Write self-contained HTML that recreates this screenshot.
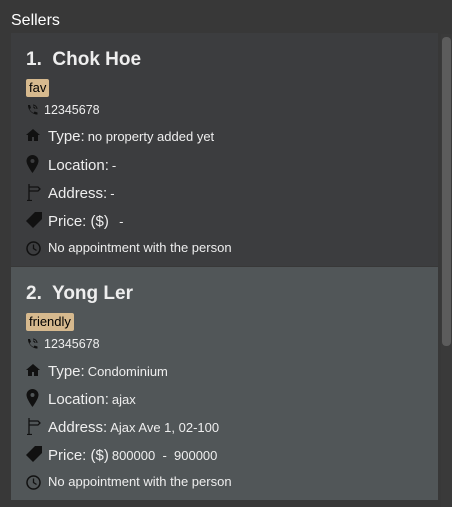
<html><head><style>
body{margin:0;width:452px;height:507px;background:#383838;font-family:"Liberation Sans",sans-serif;color:#fff;position:relative;overflow:hidden}
.t{position:absolute;white-space:nowrap}
.h{position:absolute;left:11px;top:12px;font-size:16px}
.card{position:absolute;left:11px;width:427px;height:233px}
.name{left:15px;font-size:19px;font-weight:bold;color:#eee}
.tag{left:15px;background:#d6b98e;color:#000;font-size:13px;padding:1px 3px;border-radius:2px;height:16px;line-height:16px}
.lab{left:37px;font-size:15px;color:#eee}
.lab span{font-size:13px;margin-left:3px}
.ph{left:33px;font-size:12.5px;color:#eee}
.ic{position:absolute;left:15px}
</style></head><body>
<div class="h">Sellers</div>
<div style="position:absolute;left:441px;top:34px;width:11px;height:473px;background:#3a3a3a"></div>
<div style="position:absolute;left:442px;top:37px;width:9px;height:309px;background:#5c5c5c;border-radius:4px"></div>
<div class="card" style="top:33px;background:#3c3d3f">
<div class="t name" style="top:16px">1.&nbsp; Chok Hoe</div>
<div class="t tag" style="top:46px">fav</div>
<svg class="ic" style="top:71px" width="12" height="13" viewBox="0 0 12 13"><path d="M2 1l2 0 1 3-1.5 1c1 2 2 3 4 4l1-1.5 3 1v2c-5 0-9.5-4-9.5-9.5z" fill="#111"/><path d="M7 1a4 4 0 0 1 4 4M7 3a2 2 0 0 1 2 2" stroke="#111" fill="none"/></svg>
<div class="t ph" style="top:70px">12345678</div>
<svg class="ic" style="top:96px" width="14" height="12" viewBox="0 0 14 12"><path d="M7 0L0 6h2v6h4V8h2v4h4V6h2z" fill="#111"/></svg>
<div class="t lab" style="top:95px">Type:<span>no property added yet</span></div>
<svg class="ic" style="top:122px" width="13" height="18" viewBox="0 0 13 18"><path d="M6.5 0a6 6 0 0 0-6 6c0 4 6 12 6 12s6-8 6-12a6 6 0 0 0-6-6zm0 4a2 2 0 1 1 0 4 2 2 0 0 1 0-4z" fill="#111"/></svg>
<div class="t lab" style="top:124px">Location:<span>-</span></div>
<svg class="ic" style="top:151px" width="15" height="17" viewBox="0 0 15 17"><path d="M3 0v17M1 16.5h5M3 3h9l2 2-2 2H3" stroke="#111" fill="none" stroke-width="1.3"/></svg>
<div class="t lab" style="top:152px">Address:<span>-</span></div>
<svg class="ic" style="top:179px" width="16" height="16" viewBox="0 0 16 16"><path d="M9 0h7v7l-9 9-7-7z" fill="#111"/></svg>
<div class="t lab" style="top:180px">Price: ($)<span>&nbsp; -</span></div>
<svg class="ic" style="top:208px" width="15" height="15" viewBox="0 0 15 15"><circle cx="7.5" cy="7.5" r="6.5" stroke="#111" stroke-width="1.5" fill="none"/><path d="M7.5 3.5v4l3 2" stroke="#111" stroke-width="1.3" fill="none"/></svg>
<div class="t lab" style="top:207px;font-size:13px">No appointment with the person</div>
</div>
<div class="card" style="top:267px;background:#515658">
<div class="t name" style="top:16px">2.&nbsp; Yong Ler</div>
<div class="t tag" style="top:46px">friendly</div>
<svg class="ic" style="top:71px" width="12" height="13" viewBox="0 0 12 13"><path d="M2 1l2 0 1 3-1.5 1c1 2 2 3 4 4l1-1.5 3 1v2c-5 0-9.5-4-9.5-9.5z" fill="#111"/><path d="M7 1a4 4 0 0 1 4 4M7 3a2 2 0 0 1 2 2" stroke="#111" fill="none"/></svg>
<div class="t ph" style="top:70px">12345678</div>
<svg class="ic" style="top:97px" width="14" height="12" viewBox="0 0 14 12"><path d="M7 0L0 6h2v6h4V8h2v4h4V6h2z" fill="#111"/></svg>
<div class="t lab" style="top:96px">Type:<span>Condominium</span></div>
<svg class="ic" style="top:122px" width="13" height="18" viewBox="0 0 13 18"><path d="M6.5 0a6 6 0 0 0-6 6c0 4 6 12 6 12s6-8 6-12a6 6 0 0 0-6-6zm0 4a2 2 0 1 1 0 4 2 2 0 0 1 0-4z" fill="#111"/></svg>
<div class="t lab" style="top:124px">Location:<span>ajax</span></div>
<svg class="ic" style="top:151px" width="15" height="17" viewBox="0 0 15 17"><path d="M3 0v17M1 16.5h5M3 3h9l2 2-2 2H3" stroke="#111" fill="none" stroke-width="1.3"/></svg>
<div class="t lab" style="top:152px">Address:<span>Ajax Ave 1, 02-100</span></div>
<svg class="ic" style="top:179px" width="16" height="16" viewBox="0 0 16 16"><path d="M9 0h7v7l-9 9-7-7z" fill="#111"/></svg>
<div class="t lab" style="top:180px">Price: ($)<span>800000 &nbsp;- &nbsp;900000</span></div>
<svg class="ic" style="top:208px" width="15" height="15" viewBox="0 0 15 15"><circle cx="7.5" cy="7.5" r="6.5" stroke="#111" stroke-width="1.5" fill="none"/><path d="M7.5 3.5v4l3 2" stroke="#111" stroke-width="1.3" fill="none"/></svg>
<div class="t lab" style="top:207px;font-size:13px">No appointment with the person</div>
</div>
</body></html>
